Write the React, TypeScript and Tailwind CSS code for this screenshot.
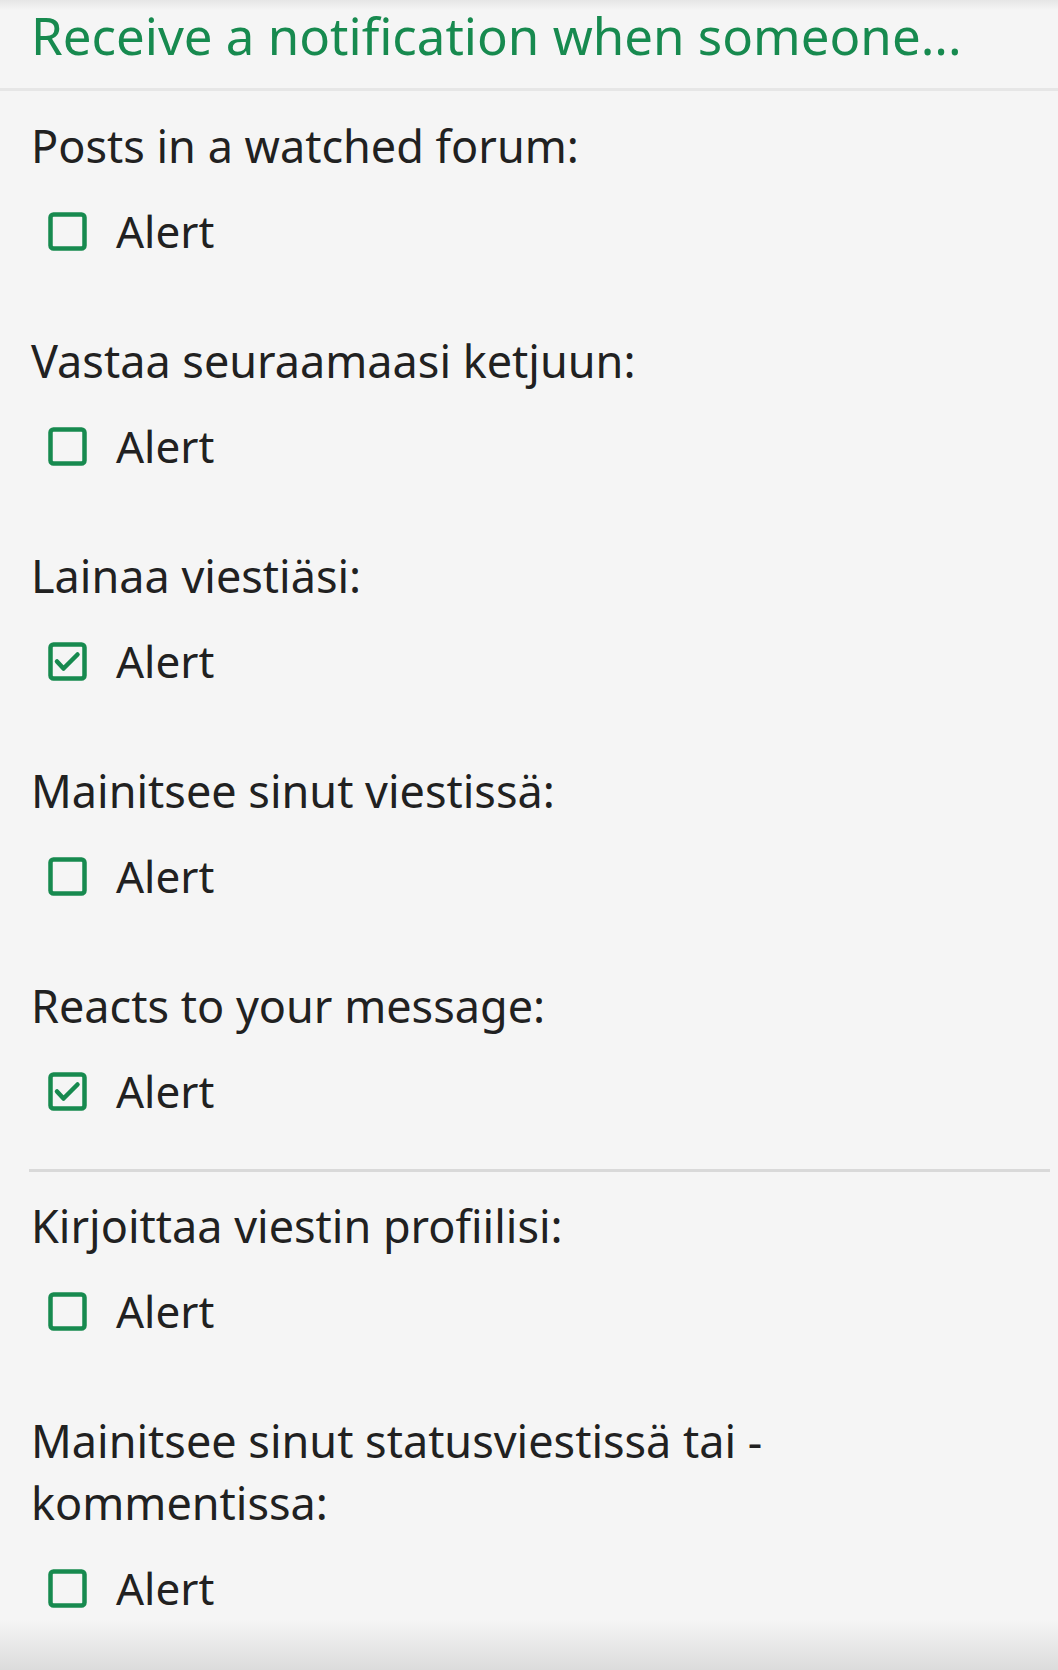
import React from "react";

type Pref = { label: string; checked: boolean; divider?: boolean };

const prefs: Pref[] = [
  { label: "Posts in a watched forum:", checked: false },
  { label: "Vastaa seuraamaasi ketjuun:", checked: false },
  { label: "Lainaa viestiäsi:", checked: true },
  { label: "Mainitsee sinut viestissä:", checked: false },
  { label: "Reacts to your message:", checked: true },
  { label: "Kirjoittaa viestin profiilisi:", checked: false, divider: true },
  { label: "Mainitsee sinut statusviestissä tai -kommentissa:", checked: false },
];

function CheckBox({ checked }: { checked: boolean }) {
  return (
    <svg width="39" height="39" viewBox="0 0 39 39" className="shrink-0">
      <rect x="2.5" y="2.5" width="34" height="34" rx="3" fill="none" stroke="#178a4f" strokeWidth="4.5" />
      {checked && (
        <polyline
          points="9,19.5 15.5,26.5 29.5,12.5"
          fill="none"
          stroke="#178a4f"
          strokeWidth="4.5"
          strokeLinecap="round"
          strokeLinejoin="round"
        />
      )}
    </svg>
  );
}

function PrefRow({ pref, first }: { pref: Pref; first: boolean }) {
  return (
    <>
      {pref.divider && <div className="mt-[47px] -ml-[2px] mr-[8px] h-[3px] bg-[#d9d9d9]" />}
      <div className={first ? "" : pref.divider ? "mt-[23px]" : "mt-[68px]"}>
        <div className="text-[45px] leading-[62px] text-[#212121] pr-[200px]">{pref.label}</div>
        <label className="mt-[23px] flex h-[62px] items-center gap-[29px] pl-[17px] text-[44px] text-[#212121]">
          <CheckBox checked={pref.checked} />
          <span>Alert</span>
        </label>
      </div>
    </>
  );
}

export default function App() {
  return (
    <div className="relative min-h-[1670px] bg-[#f5f5f5] font-['Noto_Sans',sans-serif]">
      <div className="pointer-events-none absolute inset-x-0 top-0 h-[10px] bg-gradient-to-b from-[#e6e6e6] to-transparent" />
      <h2 className="border-b-[3px] border-[#e6e6e6] px-[31px] pb-[23px] pt-[5px] text-[51px] font-normal leading-[60px] text-[#178a4f]">
        Receive a notification when someone...
      </h2>
      <div className="pl-[31px] pt-[24px] pb-[49px]">
        {prefs.map((p, i) => (
          <PrefRow key={p.label} pref={p} first={i === 0} />
        ))}
      </div>
      <div className="pointer-events-none absolute inset-x-0 bottom-0 h-[50px] bg-gradient-to-b from-transparent to-[#dcdcdc]" />
    </div>
  );
}
